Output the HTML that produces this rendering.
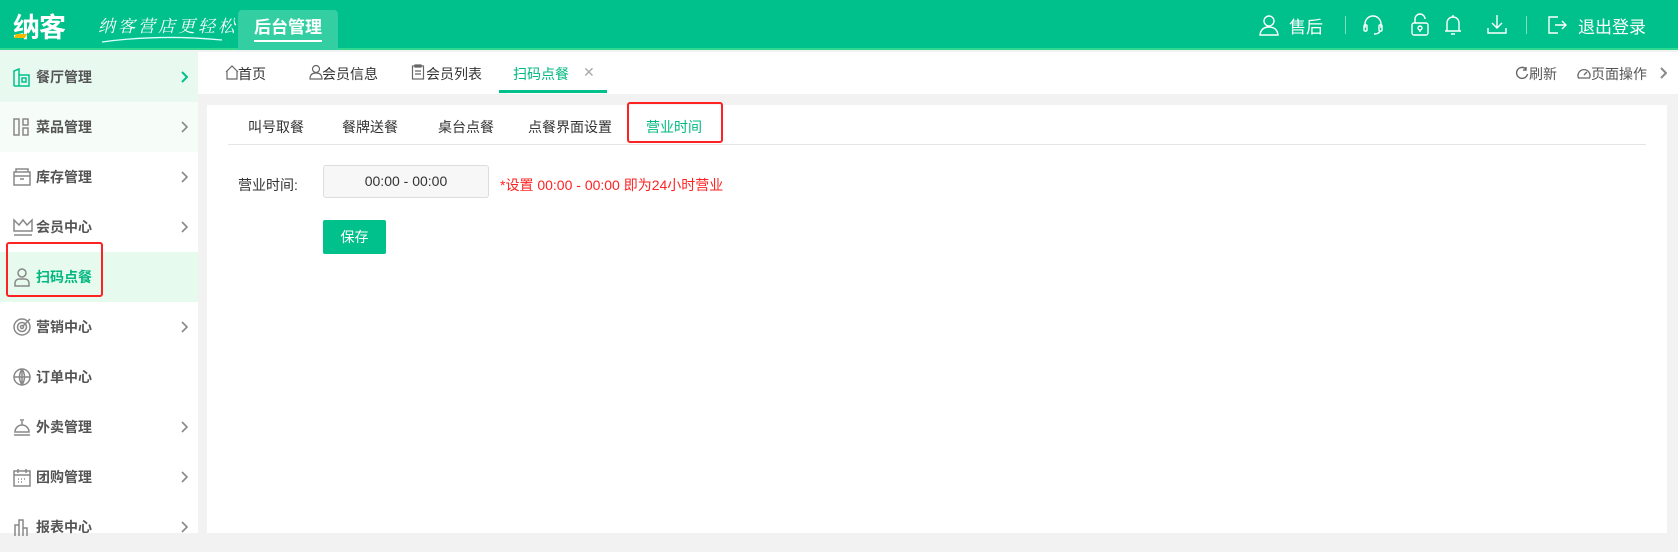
<!DOCTYPE html>
<html><head><meta charset="utf-8"><style>
*{margin:0;padding:0;box-sizing:border-box}
body{width:1678px;height:533px;overflow:hidden;background:#f2f2f2;font-family:"Liberation Sans","Noto Sans CJK SC",sans-serif;position:relative;color:#333}
.abs{position:absolute}
#hd{left:0;top:0;width:1678px;height:50px;background:#00c18b;border-bottom:2px solid #2fd98f}
.logo{left:13px;top:6px;font-size:27px;font-weight:bold;color:#fff;letter-spacing:-1px}
.slogan{left:98px;top:12px;font-size:17px;color:#fff;font-family:"Liberation Serif","Noto Serif CJK SC",serif;font-style:italic;letter-spacing:3px}
.tabtop{left:238px;top:10px;width:100px;height:40px;background:#33cea2;border-radius:4px 4px 0 0;color:#fff;font-size:17px;font-weight:bold;text-align:center;line-height:36px}
.tabtop span{border-bottom:2px solid #fff;padding-bottom:3px}
.hr{color:#fff;font-size:17px;top:13px}
.sep{width:1px;height:18px;background:#7fe0c0;top:16px}
#sb{left:0;top:52px;width:198px;height:481px;background:#fff}
.it{position:absolute;left:0;width:198px;height:50px;font-size:14px;font-weight:bold;color:#555;line-height:50px;padding-left:36px}
.it svg{position:absolute;left:12px;top:15px}
.it svg.ar{left:180px;top:19px}
#tb{left:198px;top:52px;width:1480px;height:42px;background:#fff}
.t{position:absolute;top:12px;font-size:14px;color:#333}
#ct{left:207px;top:105px;width:1460px;height:428px;background:#fff}
.st{position:absolute;top:12px;font-size:14px;color:#333}
</style></head><body>
<div id="hd" class="abs"></div>
<div class="abs logo">纳客</div>
<div class="abs" style="left:15px;top:34px;width:11px;height:4px;background:#f5b800;transform:skewX(-30deg)"></div>
<div class="abs slogan">纳客营店更轻松</div>
<svg class="abs" style="left:100px;top:34px" width="125" height="10"><path d="M2 8 Q60 0 122 6" stroke="#dff" stroke-width="1.3" fill="none"/></svg>
<div class="abs tabtop"><span>后台管理</span></div>
<svg class="abs" style="left:1258px;top:14px" width="22" height="22" fill="none" stroke="#fff" stroke-width="1.4"><circle cx="11" cy="7" r="5"/><path d="M2 21 Q3 13 11 13 Q19 13 20 21 Z"/></svg>
<div class="abs hr" style="left:1289px">售后</div>
<div class="abs sep" style="left:1345px"></div>
<svg class="abs" style="left:1362px;top:14px" width="22" height="22" fill="none" stroke="#fff" stroke-width="1.4"><path d="M3 14 V10 A8 8 0 0 1 19 10 V14"/><rect x="2" y="11" width="3" height="6" rx="1"/><rect x="17" y="11" width="3" height="6" rx="1"/><path d="M18 17 Q17 20 12 20"/></svg>
<svg class="abs" style="left:1410px;top:13px" width="20" height="24" fill="none" stroke="#fff" stroke-width="1.4"><path d="M5 10 V6 A5 5 0 0 1 15 6"/><rect x="2" y="10" width="16" height="12" rx="2"/><circle cx="10" cy="15" r="2"/><path d="M10 17v2"/></svg>
<svg class="abs" style="left:1443px;top:13px" width="20" height="24" fill="none" stroke="#fff" stroke-width="1.4"><path d="M4 18 V10 A6 6 0 0 1 16 10 V18 Z M2 18h16 M8 21h4 M10 2v2"/></svg>
<svg class="abs" style="left:1486px;top:13px" width="22" height="22" fill="none" stroke="#fff" stroke-width="1.4"><path d="M11 2v13 M6 10l5 5 5-5 M2 15v5h18v-5"/></svg>
<div class="abs sep" style="left:1526px"></div>
<svg class="abs" style="left:1546px;top:14px" width="22" height="22" fill="none" stroke="#fff" stroke-width="1.4"><path d="M12 3H3v16h9 M9 11h11 M16 7l4 4-4 4"/></svg>
<div class="abs hr" style="left:1578px">退出登录</div>

<div id="sb" class="abs">
<div class="it" style="top:0;background:#e8faf0;color:#555">餐厅管理<svg width="20" height="20" fill="none" stroke="#00c18b" stroke-width="1.5"><path d="M2 19V4l5-2v17 M7 8h10v11H2 M10 11h4v4h-4z"/></svg><svg class="ar" width="8" height="12" fill="none" stroke="#00c18b" stroke-width="2"><path d="M2 1l5 5-5 5"/></svg></div>
<div class="it" style="top:50px;background:#f6fdf9">菜品管理<svg width="20" height="20" fill="none" stroke="#888" stroke-width="1.5"><rect x="2" y="2" width="5" height="16"/><rect x="11" y="2" width="5" height="6"/><rect x="11" y="11" width="5" height="7"/></svg><svg class="ar" width="8" height="12" fill="none" stroke="#888" stroke-width="1.6"><path d="M2 1l5 5-5 5"/></svg></div>
<div class="it" style="top:100px">库存管理<svg width="20" height="20" fill="none" stroke="#888" stroke-width="1.5"><path d="M4 5V2h12v3 M2 5h16v13H2z M2 9h16 M8 12h4"/></svg><svg class="ar" width="8" height="12" fill="none" stroke="#888" stroke-width="1.6"><path d="M2 1l5 5-5 5"/></svg></div>
<div class="it" style="top:150px">会员中心<svg width="22" height="20" fill="none" stroke="#888" stroke-width="1.5"><path d="M2 14V3l5 5 4-5 4 5 5-5v11z M2 18h18"/></svg><svg class="ar" width="8" height="12" fill="none" stroke="#888" stroke-width="1.6"><path d="M2 1l5 5-5 5"/></svg></div>
<div class="it" style="top:200px;background:#e6fbee;color:#00b77f">扫码点餐<svg width="20" height="20" fill="none" stroke="#888" stroke-width="1.5"><circle cx="10" cy="6" r="4"/><path d="M3 19v-3a4 4 0 0 1 4-4h6a4 4 0 0 1 4 4v3z"/></svg></div>
<div class="it" style="top:250px">营销中心<svg width="20" height="20" fill="none" stroke="#888" stroke-width="1.5"><circle cx="10" cy="10" r="8"/><circle cx="10" cy="10" r="4.5"/><circle cx="10" cy="10" r="1.5"/><path d="M11 9l7-7"/></svg><svg class="ar" width="8" height="12" fill="none" stroke="#888" stroke-width="1.6"><path d="M2 1l5 5-5 5"/></svg></div>
<div class="it" style="top:300px">订单中心<svg width="20" height="20" fill="none" stroke="#888" stroke-width="1.5"><circle cx="10" cy="10" r="8"/><path d="M2 10h16 M10 2v16 M10 2q-5 8 0 16 M10 2q5 8 0 16"/></svg></div>
<div class="it" style="top:350px">外卖管理<svg width="20" height="20" fill="none" stroke="#888" stroke-width="1.5"><path d="M3 15a7 7 0 0 1 14 0z M2 18h16 M10 4v4 M8 3h4"/></svg><svg class="ar" width="8" height="12" fill="none" stroke="#888" stroke-width="1.6"><path d="M2 1l5 5-5 5"/></svg></div>
<div class="it" style="top:400px">团购管理<svg width="20" height="20" fill="none" stroke="#888" stroke-width="1.5"><rect x="2" y="4" width="16" height="15"/><path d="M6 2v4 M14 2v4 M2 8h16 M6 12h1 M9 12h1 M12 12h1 M6 15h1 M9 15h1"/></svg><svg class="ar" width="8" height="12" fill="none" stroke="#888" stroke-width="1.6"><path d="M2 1l5 5-5 5"/></svg></div>
<div class="it" style="top:450px">报表中心<svg width="20" height="20" fill="none" stroke="#888" stroke-width="1.5"><path d="M3 19V8h4v11 M7 19V3h4v16 M11 19v-8h4v8"/></svg><svg class="ar" width="8" height="12" fill="none" stroke="#888" stroke-width="1.6"><path d="M2 1l5 5-5 5"/></svg></div>
</div>
<div class="abs" style="left:6px;top:242px;width:97px;height:55px;border:2px solid #f22;border-radius:3px"></div>

<div id="tb" class="abs">
<svg style="position:absolute;left:26px;top:12px" width="16" height="16" fill="none" stroke="#666" stroke-width="1.2"><path d="M2 8L8 2l6 6 M3 7v8h10V7"/></svg><span class="t" style="left:40px">首页</span>
<svg style="position:absolute;left:110px;top:12px" width="16" height="16" fill="none" stroke="#666" stroke-width="1.2"><circle cx="8" cy="5" r="3.5"/><path d="M2 15q0-6 6-6t6 6z"/></svg><span class="t" style="left:124px">会员信息</span>
<svg style="position:absolute;left:213px;top:12px" width="14" height="16" fill="none" stroke="#666" stroke-width="1.2"><rect x="1.5" y="2" width="11" height="13"/><path d="M4 1h6v2H4z M4 7h6 M4 10h6"/></svg><span class="t" style="left:228px">会员列表</span>
<span class="t" style="left:315px;color:#00b77f">扫码点餐</span><span class="t" style="left:385px;color:#aaa">✕</span>
<div style="position:absolute;left:301px;top:38px;width:108px;height:3px;background:#00c18b"></div>
<svg style="position:absolute;left:1317px;top:14px" width="14" height="14" fill="none" stroke="#666" stroke-width="1.4"><path d="M11 3A5.5 5.5 0 1 0 12.5 8 M11 1v3H8"/></svg><span class="t" style="left:1331px;color:#555">刷新</span>
<svg style="position:absolute;left:1379px;top:14px" width="14" height="14" fill="none" stroke="#666" stroke-width="1.3"><path d="M1.5 12A6 6 0 1 1 12.5 12 Z M7 9l3-3"/></svg><span class="t" style="left:1393px;color:#555">页面操作</span>
<svg style="position:absolute;left:1461px;top:15px" width="8" height="12" fill="none" stroke="#888" stroke-width="2"><path d="M2 1l5 5-5 5"/></svg>
</div>

<div id="ct" class="abs">
<span class="st" style="left:41px">叫号取餐</span>
<span class="st" style="left:135px">餐牌送餐</span>
<span class="st" style="left:231px">桌台点餐</span>
<span class="st" style="left:321px">点餐界面设置</span>
<span class="st" style="left:439px;color:#00b77f">营业时间</span>
<div style="position:absolute;left:420px;top:-3px;width:96px;height:41px;border:2px solid #f22;border-radius:3px"></div>
<div style="position:absolute;left:21px;top:39px;width:1418px;height:1px;background:#e5e5e5"></div>
<span class="st" style="left:31px;top:70px">营业时间:</span>
<div style="position:absolute;left:116px;top:60px;width:166px;height:33px;background:#f7f7f7;border:1px solid #ddd;border-radius:3px;text-align:center;line-height:31px;font-size:14px">00:00 - 00:00</div>
<span class="st" style="left:293px;top:70px;color:#f22">*设置 00:00 - 00:00 即为24小时营业</span>
<div style="position:absolute;left:116px;top:115px;width:63px;height:34px;background:#00c18b;color:#fff;border-radius:2px;text-align:center;line-height:34px;font-size:14px">保存</div>
</div>
</body></html>
